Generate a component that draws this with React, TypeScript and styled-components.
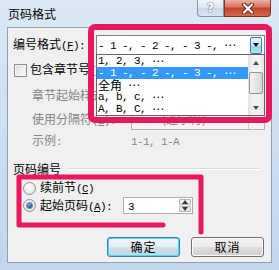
import styled, { createGlobalStyle } from "styled-components";

const GlobalStyle = createGlobalStyle`
  html, body {
    margin: 0;
    padding: 0;
    background: #ffffff;
  }
`;

const CJK = `"Noto Sans CJK SC", "Noto Sans", sans-serif`;

const Window = styled.div`
  position: relative;
  width: 279px;
  height: 270px;
  display: flex;
  flex-direction: column;
  overflow: hidden;
  background: linear-gradient(180deg, #dce8f4 0%, #cfe0f1 40%, #c2d6eb 100%);
  font-family: ${CJK};
  font-size: 12px;
  line-height: 1;
  color: #000;
`;

const TitleBar = styled.div`
  height: 27px;
  flex: none;
  display: flex;
  align-items: flex-start;
  padding: 0 8px;
`;

const Title = styled.div`
  flex: 1;
  margin-top: 7px;
  line-height: 13px;
`;

const Captions = styled.div`
  display: flex;
`;

const CaptionButton = styled.div<{ $close?: boolean }>`
  width: ${(p) => (p.$close ? 47 : 27)}px;
  height: 17px;
  box-sizing: border-box;
  border: 1px solid ${(p) => (p.$close ? "#7e3325" : "#8192a8")};
  border-top: none;
  border-radius: ${(p) => (p.$close ? "0 0 4px 0" : "0 0 0 4px")};
  background: ${(p) =>
    p.$close
      ? "linear-gradient(180deg, #eab0a2 0%, #d87560 42%, #c4432c 52%, #d4694c 100%)"
      : "linear-gradient(180deg, #f1f5fa 0%, #e0e8f1 45%, #cbd8e6 52%, #dae5f0 100%)"};
  display: flex;
  align-items: center;
  justify-content: center;
  color: #fff;
  font-family: "DejaVu Sans", sans-serif;
  font-weight: bold;
  font-size: 12px;
  text-shadow: 0 0 1px #55657a, 0 0 2px #55657a;
`;

const Client = styled.div`
  flex: 1;
  margin: 0 7px 7px 7px;
  background: #f0f0f0;
  border: 1px solid #8ba0b9;
  padding: 7px 6px 0 5px;
  display: flex;
  flex-direction: column;
`;

const Row = styled.div<{ $h: number; $top: number; $indent?: number }>`
  height: ${(p) => p.$h}px;
  margin-top: ${(p) => p.$top}px;
  padding-left: ${(p) => p.$indent ?? 0}px;
  display: flex;
  align-items: center;
  flex: none;
`;

const Label = styled.span<{ $w?: number; $disabled?: boolean }>`
  width: ${(p) => (p.$w ? `${p.$w}px` : "auto")};
  flex: none;
  white-space: nowrap;
  color: ${(p) => (p.$disabled ? "#858585" : "#000")};
`;

const Mono = styled.span`
  font-family: "Liberation Mono", monospace;
  font-size: 11px;
  letter-spacing: -0.6px;
  white-space: pre;
`;

const Ell = styled.span`
  display: inline-block;
  width: 12px;
  text-align: center;
  font-family: "DejaVu Sans", sans-serif;
  font-size: 12px;
`;

const Combo = styled.div<{ $w: number; $disabled?: boolean }>`
  position: relative;
  width: ${(p) => p.$w}px;
  height: 20px;
  box-sizing: border-box;
  border: 1px solid ${(p) => (p.$disabled ? "#adb2b5" : "#77828f")};
  background: ${(p) => (p.$disabled ? "#f4f4f4" : "#fff")};
  display: flex;
  align-items: center;
  color: ${(p) => (p.$disabled ? "#858585" : "#000")};
`;

const ComboText = styled.div<{ $pad: number }>`
  flex: 1;
  padding-left: ${(p) => p.$pad}px;
  white-space: nowrap;
  overflow: hidden;
`;

const ArrowButton = styled.div<{ $active?: boolean }>`
  width: ${(p) => (p.$active ? 12 : 16)}px;
  height: ${(p) => (p.$active ? 17 : 18)}px;
  margin-right: ${(p) => (p.$active ? 2 : 0)}px;
  box-sizing: border-box;
  border: ${(p) => (p.$active ? "1px solid #3c7fb1" : "none")};
  border-left: 1px solid ${(p) => (p.$active ? "#3c7fb1" : "#c9ccd0")};
  border-radius: ${(p) => (p.$active ? 2 : 0)}px;
  background: ${(p) =>
    p.$active ? "linear-gradient(180deg, #e5f4fc 0%, #c4e5f6 50%, #98d1ef 52%, #b6e0f5 100%)" : "transparent"};
  display: flex;
  align-items: center;
  justify-content: center;
`;

const DownTri = styled.div<{ $color: string }>`
  width: 0;
  height: 0;
  border-left: 3.5px solid transparent;
  border-right: 3.5px solid transparent;
  border-top: 4px solid ${(p) => p.$color};
`;

const UpTri = styled.div<{ $color: string }>`
  width: 0;
  height: 0;
  border-left: 3.5px solid transparent;
  border-right: 3.5px solid transparent;
  border-bottom: 4px solid ${(p) => p.$color};
`;

const DropList = styled.div`
  position: absolute;
  top: 100%;
  left: -1px;
  width: 169px;
  height: 62px;
  box-sizing: border-box;
  border: 1px solid #646464;
  background: #fff;
  display: flex;
  z-index: 2;
`;

const Items = styled.div`
  flex: 1;
  display: flex;
  flex-direction: column;
`;

const Item = styled.div<{ $selected?: boolean }>`
  height: 12px;
  padding-left: 1px;
  display: flex;
  align-items: center;
  white-space: nowrap;
  background: ${(p) => (p.$selected ? "#3399ff" : "transparent")};
  color: ${(p) => (p.$selected ? "#fff" : "#000")};
`;

const ScrollBar = styled.div`
  width: 16px;
  display: flex;
  flex-direction: column;
  align-items: center;
  background: linear-gradient(90deg, #e3e3e3 0%, #f2f2f2 30%, #f2f2f2 70%, #e6e6e6 100%);
`;

const ScrollArrow = styled.div`
  height: 15px;
  width: 100%;
  display: flex;
  align-items: center;
  justify-content: center;
`;

const Thumb = styled.div`
  width: 14px;
  height: 22px;
  margin-top: 2px;
  box-sizing: border-box;
  border: 1px solid #959595;
  border-radius: 2px;
  background: linear-gradient(90deg, #f3f3f3 0%, #e6e6e6 50%, #d6d6d6 100%);
`;

const Spacer = styled.div`
  flex: 1;
`;

const CheckBox = styled.div`
  width: 13px;
  height: 13px;
  margin: 0 3px 0 1px;
  box-sizing: border-box;
  border: 1px solid #8e8f8f;
  background: linear-gradient(135deg, #dcdcdc 0%, #f0f0f0 60%, #fbfbfb 100%);
  box-shadow: inset 0 0 0 1px #f4f4f4;
`;

const GroupLine = styled.div`
  flex: 1;
  height: 0;
  margin: 0 6px 0 6px;
  border-top: 1px solid #d5dfe5;
  border-bottom: 1px solid #fff;
`;

const Radio = styled.div<{ $checked?: boolean }>`
  width: 13px;
  height: 13px;
  margin-right: 4px;
  box-sizing: border-box;
  border-radius: 50%;
  border: 1px solid #8e8f8f;
  background: radial-gradient(circle at 40% 35%, #ffffff 0%, #ececec 55%, #d5d5d5 100%);
  display: flex;
  align-items: center;
  justify-content: center;
  &::after {
    content: "";
    display: ${(p) => (p.$checked ? "block" : "none")};
    width: 5px;
    height: 5px;
    border-radius: 50%;
    background: radial-gradient(circle at 40% 35%, #8eb4d8 0%, #2e5f8e 55%, #1c3c60 100%);
    box-shadow: 0 0 0 1px #6f8fb0;
  }
`;

const Spin = styled.div`
  width: 70px;
  height: 17px;
  box-sizing: border-box;
  border: 1px solid #abadb3;
  background: #fff;
  display: flex;
  align-items: center;
`;

const SpinValue = styled.div`
  flex: 1;
  padding-left: 4px;
`;

const SpinButtons = styled.div`
  width: 12px;
  height: 13px;
  margin-right: 1px;
  display: flex;
  flex-direction: column;
  gap: 1px;
`;

const SpinHalf = styled.div`
  flex: 1;
  box-sizing: border-box;
  border: 1px solid #b3b3b3;
  border-radius: 1px;
  background: linear-gradient(180deg, #f6f6f6 0%, #e1e1e1 100%);
  display: flex;
  align-items: center;
  justify-content: center;
`;

const ButtonRow = styled.div`
  height: 20px;
  margin-top: 23px;
  padding-right: 1px;
  display: flex;
  justify-content: flex-end;
  gap: 11px;
`;

const Button = styled.div<{ $default?: boolean }>`
  width: 73px;
  height: 20px;
  box-sizing: border-box;
  border: 1px solid ${(p) => (p.$default ? "#3c7fb1" : "#707070")};
  border-radius: 3px;
  background: ${(p) =>
    p.$default
      ? "linear-gradient(180deg, #f3f8fb 0%, #e6eef3 48%, #cfe1ec 52%, #c0d6e4 100%)"
      : "linear-gradient(180deg, #f2f2f2 0%, #ebebeb 48%, #dddddd 52%, #cfcfcf 100%)"};
  box-shadow: inset 0 0 0 1px ${(p) => (p.$default ? "#48d8fb" : "#fcfcfc")};
  display: flex;
  align-items: center;
  justify-content: center;
  letter-spacing: 1px;
`;

const Annotation = styled.svg`
  position: absolute;
  left: 0;
  top: 0;
  pointer-events: none;
  z-index: 5;
`;

function Mn({ text, k, colon }: { text: string; k: string; colon?: boolean }) {
  return (
    <>
      {text}
      <Mono>
        (<u>{k}</u>){colon ? ":" : ""}
      </Mono>
    </>
  );
}

const formats = [
  <>
    <Mono>1, 2, 3, </Mono>
    <Ell>⋯</Ell>
  </>,
  <>
    <Mono>- 1 -, - 2 -, - 3 -, </Mono>
    <Ell>⋯</Ell>
  </>,
  <>
    全角<Mono> </Mono>
    <Ell>⋯</Ell>
  </>,
  <>
    <Mono>a, b, c, </Mono>
    <Ell>⋯</Ell>
  </>,
  <>
    <Mono>A, B, C, </Mono>
    <Ell>⋯</Ell>
  </>,
];

export default function App() {
  return (
    <>
      <GlobalStyle />
      <Window>
        <TitleBar>
          <Title>页码格式</Title>
          <Captions>
            <CaptionButton>?</CaptionButton>
            <CaptionButton $close>
              <svg width="14" height="11" viewBox="0 0 14 11">
                <path d="M3 1.5 L11 9.5 M11 1.5 L3 9.5" stroke="#5b2418" strokeWidth="4" strokeLinecap="round" />
                <path d="M3 1.5 L11 9.5 M11 1.5 L3 9.5" stroke="#ffffff" strokeWidth="2.2" strokeLinecap="round" />
              </svg>
            </CaptionButton>
          </Captions>
        </TitleBar>

        <Client>
          <Row $h={20} $top={0}>
            <Label $w={83}>
              <Mn text="编号格式" k="F" colon />
            </Label>
            <Combo $w={169}>
              <ComboText $pad={1}>
                <Mono>- 1 -, - 2 -, - 3 -, </Mono>
                <Ell>⋯</Ell>
              </ComboText>
              <ArrowButton $active>
                <DownTri $color="#111" />
              </ArrowButton>
              <DropList>
                <Items>
                  {formats.map((f, i) => (
                    <Item key={i} $selected={i === 1}>
                      {f}
                    </Item>
                  ))}
                </Items>
                <ScrollBar>
                  <ScrollArrow>
                    <UpTri $color="#4d4d4d" />
                  </ScrollArrow>
                  <Thumb />
                  <Spacer />
                  <ScrollArrow>
                    <DownTri $color="#4d4d4d" />
                  </ScrollArrow>
                </ScrollBar>
              </DropList>
            </Combo>
          </Row>

          <Row $h={14} $top={8}>
            <CheckBox />
            <Label>
              <Mn text="包含章节号" k="N" />
            </Label>
          </Row>

          <Row $h={20} $top={9} $indent={19}>
            <Label $w={99} $disabled>
              <Mn text="章节起始样式" k="P" colon />
            </Label>
            <Combo $w={134} $disabled>
              <ComboText $pad={3} />
              <ArrowButton>
                <DownTri $color="#a0a0a0" />
              </ArrowButton>
            </Combo>
          </Row>

          <Row $h={20} $top={4} $indent={19}>
            <Label $w={99} $disabled>
              <Mn text="使用分隔符" k="E" colon />
            </Label>
            <Combo $w={134} $disabled>
              <ComboText $pad={24}>
                <Mono>-</Mono>(连字符)
              </ComboText>
              <ArrowButton>
                <DownTri $color="#a0a0a0" />
              </ArrowButton>
            </Combo>
          </Row>

          <Row $h={14} $top={4} $indent={19}>
            <Label $w={99} $disabled>
              示例<Mono>:</Mono>
            </Label>
            <Label $disabled>
              <Mono>1-1, 1-A</Mono>
            </Label>
          </Row>

          <Row $h={14} $top={14}>
            <Label>页码编号</Label>
            <GroupLine />
          </Row>

          <Row $h={14} $top={5} $indent={10}>
            <Radio />
            <Label>
              <Mn text="续前节" k="C" />
            </Label>
          </Row>

          <Row $h={17} $top={2} $indent={10}>
            <Radio $checked />
            <Label $w={83}>
              <Mn text="起始页码" k="A" colon />
            </Label>
            <Spin>
              <SpinValue>
                <Mono>3</Mono>
              </SpinValue>
              <SpinButtons>
                <SpinHalf>
                  <UpTri $color="#3d3d3d" />
                </SpinHalf>
                <SpinHalf>
                  <DownTri $color="#3d3d3d" />
                </SpinHalf>
              </SpinButtons>
            </Spin>
          </Row>

          <ButtonRow>
            <Button $default>确定</Button>
            <Button>取消</Button>
          </ButtonRow>
        </Client>

        <Annotation width="279" height="270" viewBox="0 0 279 270">
          <rect x="91" y="27" width="178" height="93" rx="4" fill="none" stroke="#e8175f" strokeWidth="6" />
          <path
            d="M163 225 L19 225 L19 177 L201 177 L201 232"
            fill="none"
            stroke="#e8175f"
            strokeWidth="5"
            strokeLinecap="round"
            strokeLinejoin="round"
          />
        </Annotation>
      </Window>
    </>
  );
}
